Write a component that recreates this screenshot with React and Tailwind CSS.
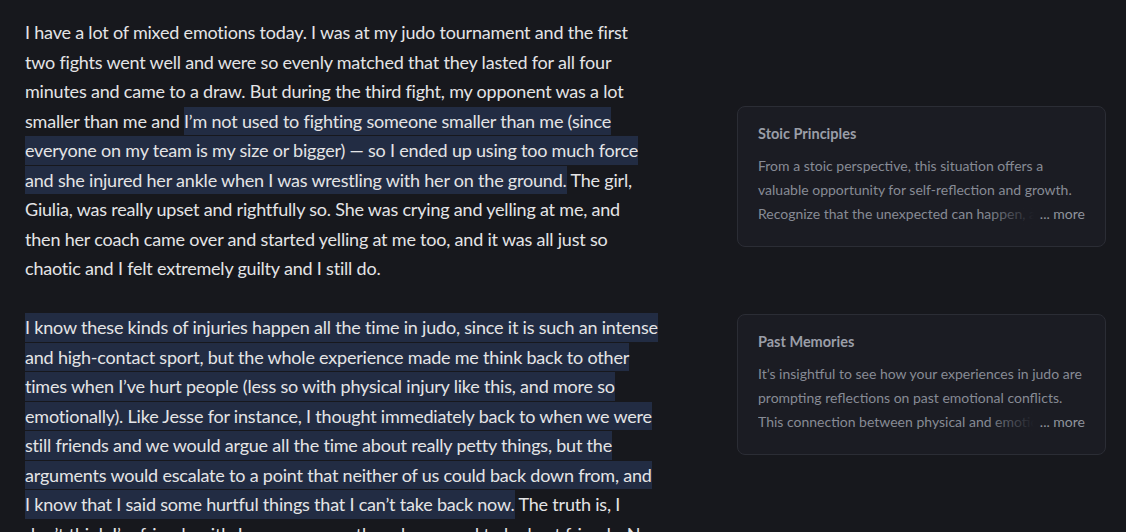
import React from "react";

const HL = ({ children }) => (
  <span className="bg-[#222c43] block h-[28.5px]">{children}</span>
);

const Line = ({ children }) => (
  <div className="flex h-[29.5px] items-start whitespace-pre leading-[28.5px]">{children}</div>
);

const p1 = [
  ["I have a lot of mixed emotions today. I was at my judo tournament and the first"],
  ["two fights went well and were so evenly matched that they lasted for all four"],
  ["minutes and came to a draw. But during the third fight, my opponent was a lot"],
  ["smaller than me and ", { h: "I’m not used to fighting someone smaller than me (since" }],
  [{ h: "everyone on my team is my size or bigger) — so I ended up using too much force" }],
  [{ h: "and she injured her ankle when I was wrestling with her on the ground." }, " The girl,"],
  ["Giulia, was really upset and rightfully so. She was crying and yelling at me, and"],
  ["then her coach came over and started yelling at me too, and it was all just so"],
  ["chaotic and I felt extremely guilty and I still do."],
];

const p2 = [
  [{ h: "I know these kinds of injuries happen all the time in judo, since it is such an intense" }],
  [{ h: "and high-contact sport, but the whole experience made me think back to other" }],
  [{ h: "times when I’ve hurt people (less so with physical injury like this, and more so" }],
  [{ h: "emotionally). Like Jesse for instance, I thought immediately back to when we were" }],
  [{ h: "still friends and we would argue all the time about really petty things, but the" }],
  [{ h: "arguments would escalate to a point that neither of us could back down from, and" }],
  [{ h: "I know that I said some hurtful things that I can’t take back now." }, " The truth is, I"],
  ["don’t think I’m friends with Jesse anymore, though we used to be best friends. Now"],
];

const Para = ({ lines }) => (
  <div>
    {lines.map((parts, i) => (
      <Line key={i}>
        {parts.map((p, j) =>
          typeof p === "string" ? <span key={j}>{p}</span> : <HL key={j}>{p.h}</HL>
        )}
      </Line>
    ))}
  </div>
);

const Card = ({ title, lines, last }) => (
  <div className="rounded-lg border border-[#2b2d35] bg-[#1b1c23] px-5 pt-4 pb-5">
    <div className="text-[14.5px] font-bold leading-[22px] text-[#9a9ea8]">{title}</div>
    <div className="mt-[9px] text-[14px] leading-6 text-[#878b95]">
      {lines.map((l, i) => (
        <div key={i} className="whitespace-nowrap">{l}</div>
      ))}
      <div className="relative overflow-hidden whitespace-nowrap">
        <span>{last}</span>
        <span className="absolute right-0 top-0 flex h-full">
          <span className="w-12 bg-gradient-to-r from-transparent to-[#1b1c23]" />
          <span className="bg-[#1b1c23] pl-1.5 text-[#8f939c]">... more</span>
        </span>
      </div>
    </div>
  </div>
);

export default function App() {
  return (
    <div
      className="h-[532px] w-full overflow-hidden bg-[#17181d] flex"
      style={{ fontFamily: "Lato, 'Noto Sans', sans-serif" }}
    >
      <div className="w-[700px] shrink-0 pl-[25px] pt-[18px] text-[18px] text-[#e4e4e6] tracking-[-0.2px]">
        <Para lines={p1} />
        <div className="h-[29.5px]" />
        <Para lines={p2} />
      </div>
      <div className="ml-[37px] w-[369px] shrink-0 pt-[106px] flex flex-col gap-[67px]">
        <Card
          title="Stoic Principles"
          lines={[
            "From a stoic perspective, this situation offers a",
            "valuable opportunity for self-reflection and growth.",
          ]}
          last="Recognize that the unexpected can happen, and it is how we respond"
        />
        <Card
          title="Past Memories"
          lines={[
            "It’s insightful to see how your experiences in judo are",
            "prompting reflections on past emotional conflicts.",
          ]}
          last="This connection between physical and emotional pain is worth exploring"
        />
      </div>
    </div>
  );
}
